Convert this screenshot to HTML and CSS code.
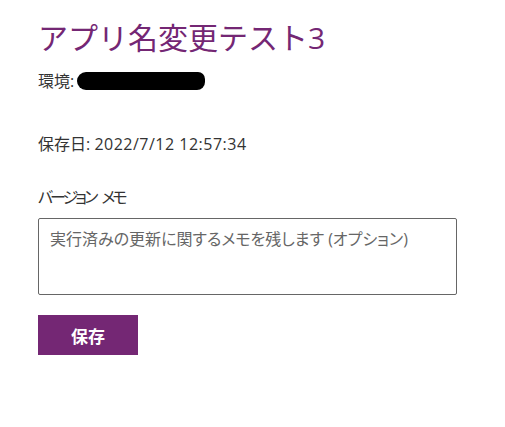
FILE: index.html
```html
<!DOCTYPE html>
<html lang="ja">
<head>
<meta charset="utf-8">
<link rel="stylesheet" href="styles.css">
</head>
<body>
<div class="page">
  <h1 class="title">アプリ名変更テスト3</h1>
  <div class="env"><span>環境:</span><span class="redact"></span></div>
  <div class="saved">保存日: <span class="stamp">2022/7/12 12:57:34</span></div>
  <label class="label" for="memo">バージョン メモ</label>
  <textarea id="memo" class="memo" placeholder="実行済みの更新に関するメモを残します (オプション)"></textarea>
  <button class="save">保存</button>
</div>
</body>
</html>
```
FILE: styles.css
```css
html, body {
  margin: 0;
  padding: 0;
  background: #fff;
}
body {
  font-family: "Open Sans", "Noto Sans CJK JP", sans-serif;
  color: #333;
}
.page {
  padding: 16px 0 0 38px;
  display: flex;
  flex-direction: column;
  align-items: flex-start;
}
.title {
  margin: 0;
  font-weight: 400;
  font-size: 30px;
  line-height: 44px;
  color: #742774;
}
.env {
  margin-top: 10px;
  font-size: 16px;
  line-height: 22px;
  display: flex;
  align-items: center;
}
.redact {
  display: inline-block;
  width: 128px;
  height: 18px;
  background: #000;
  border-radius: 9px 7px 8px 9px;
  margin-left: 3px;
}
.saved {
  margin-top: 41px;
  font-size: 16px;
  line-height: 22px;
}
.stamp {
  letter-spacing: 0.5px;
}
.label {
  margin-top: 31px;
  font-size: 16px;
  line-height: 22px;
  font-feature-settings: "palt";
  letter-spacing: -3px;
  word-spacing: 5px;
}
.memo {
  margin-top: 10px;
  box-sizing: border-box;
  width: 419px;
  height: 77px;
  border: 1px solid #666;
  border-radius: 2px;
  padding: 9px 11px;
  font-family: "Open Sans", "Noto Sans CJK JP", sans-serif;
  font-size: 16px;
  line-height: 22px;
  font-feature-settings: "palt";
  resize: none;
  color: #333;
}
.memo::placeholder {
  color: #666;
}
.save {
  margin-top: 20px;
  width: 100px;
  height: 40px;
  border: none;
  background: #742774;
  color: #fff;
  font-family: "Open Sans", "Noto Sans CJK JP", sans-serif;
  font-weight: 700;
  font-size: 17px;
  padding: 0;
}
```
